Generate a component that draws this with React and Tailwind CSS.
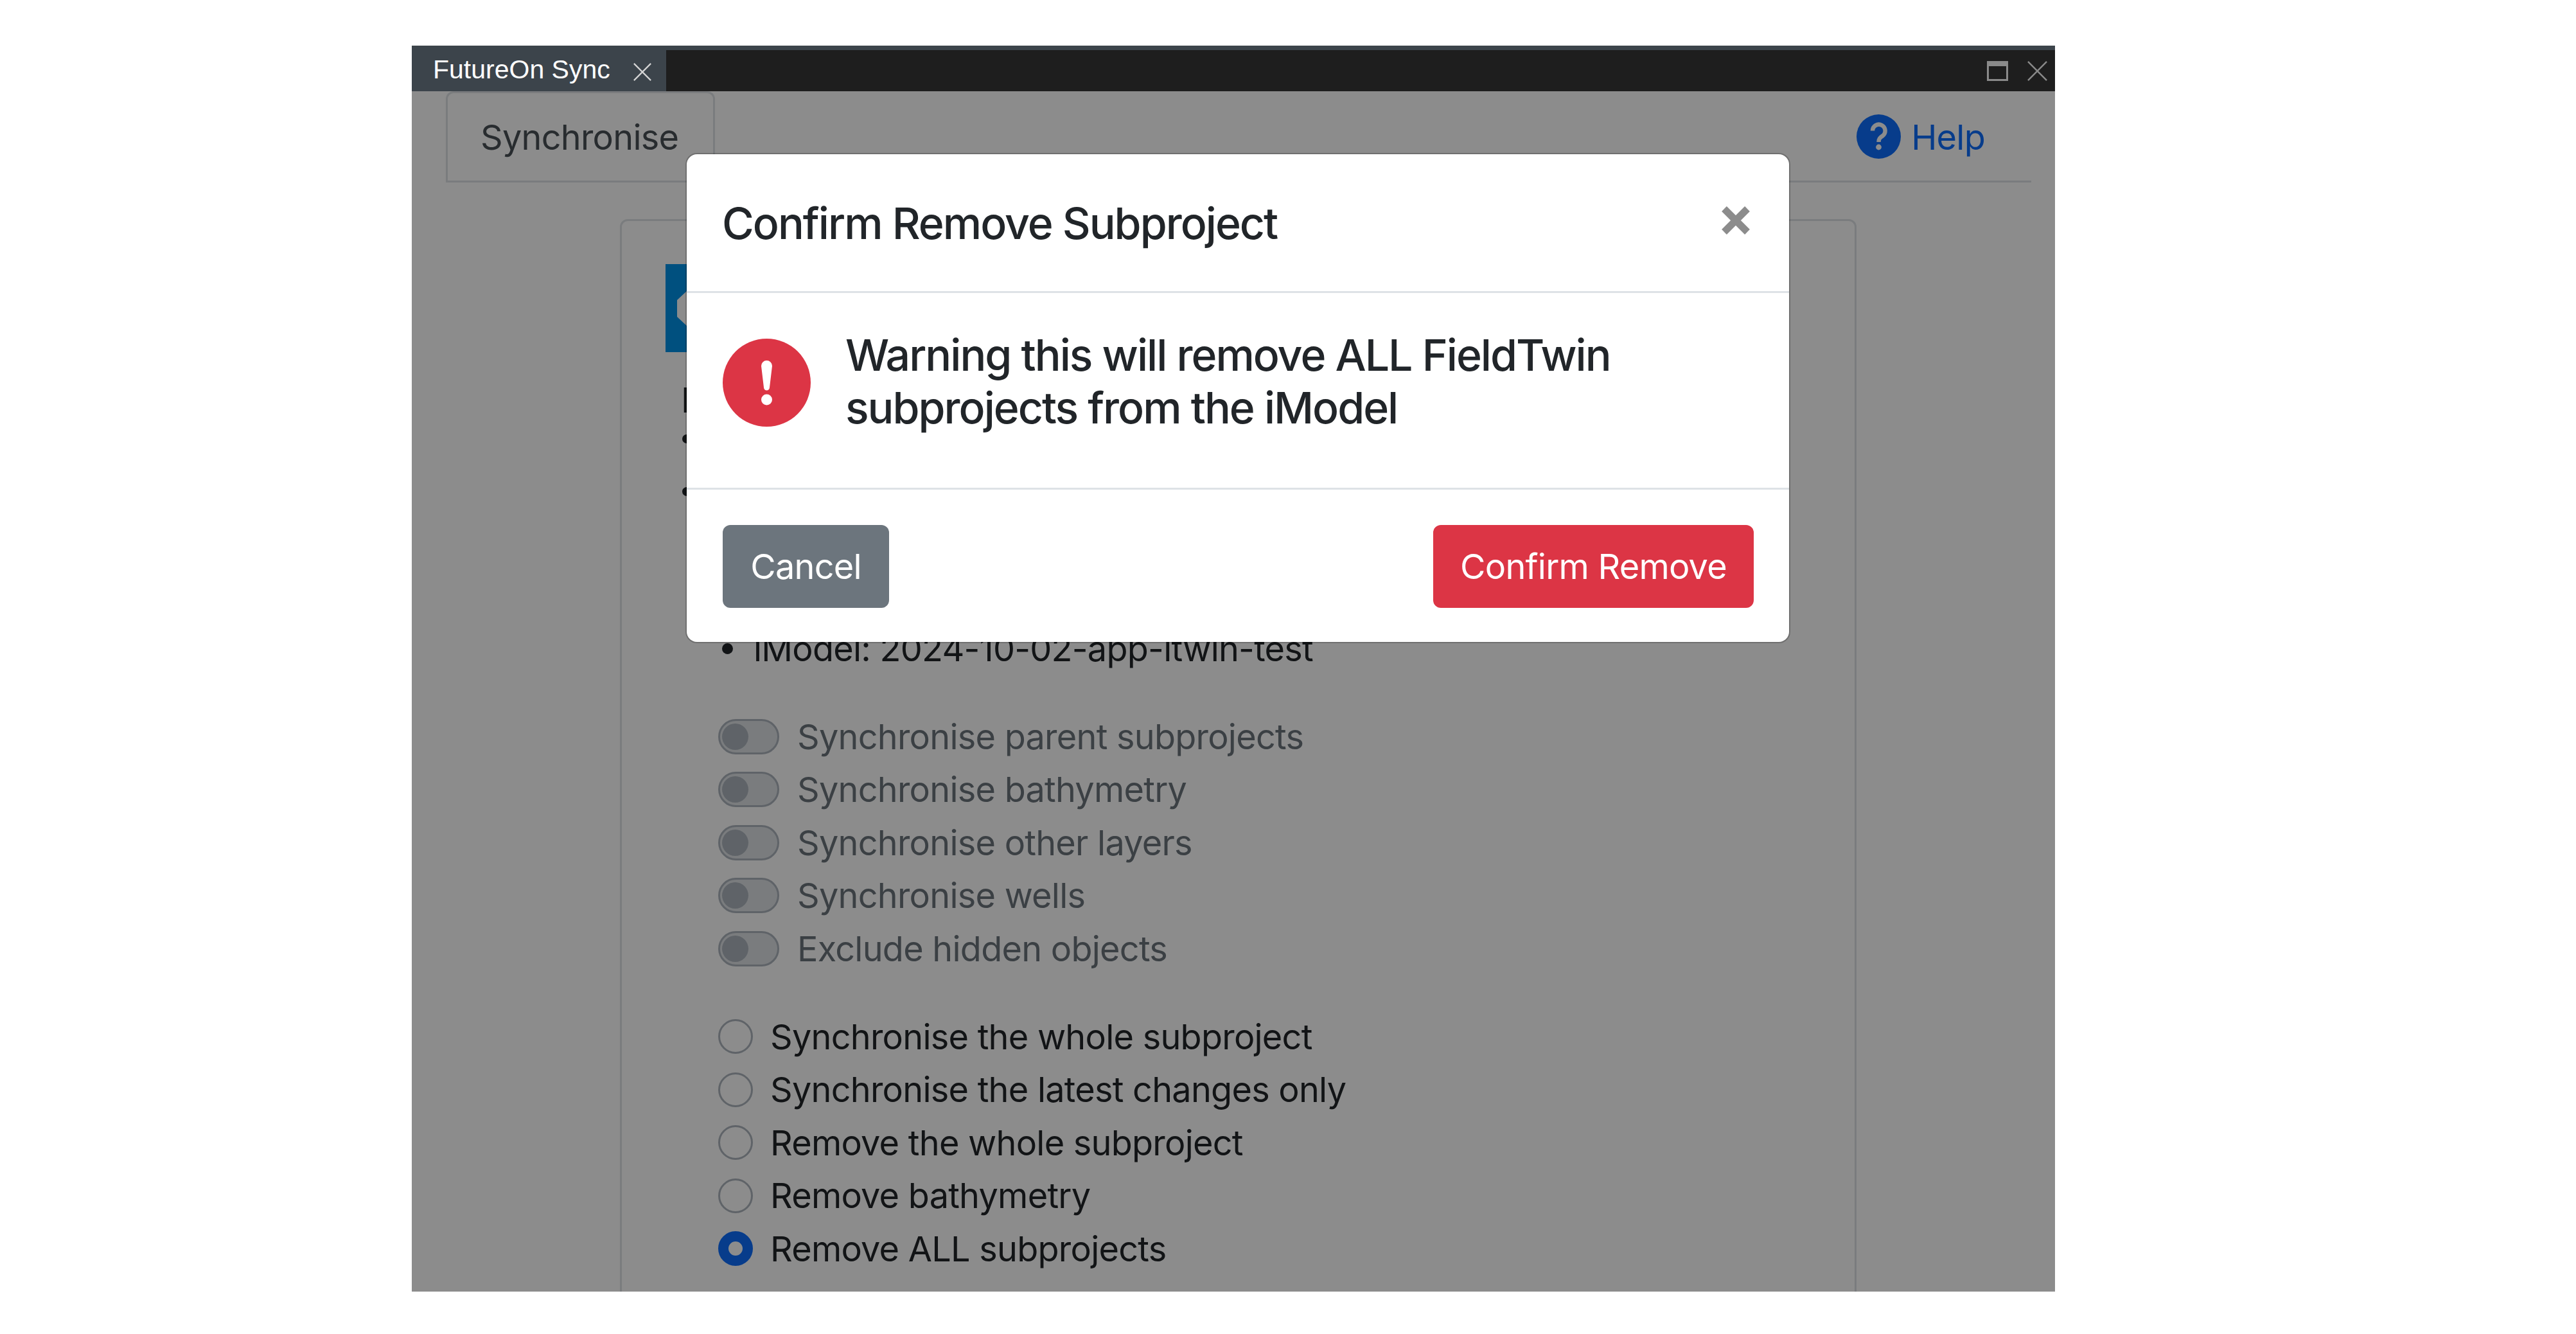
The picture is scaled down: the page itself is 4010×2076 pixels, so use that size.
const sans = 'font-["Inter","Liberation_Sans",sans-serif]';

const toggles = [
  'Synchronise parent subprojects',
  'Synchronise bathymetry',
  'Synchronise other layers',
  'Synchronise wells',
  'Exclude hidden objects',
];

const radios = [
  'Synchronise the whole subproject',
  'Synchronise the latest changes only',
  'Remove the whole subproject',
  'Remove bathymetry',
  'Remove ALL subprojects',
];

function ThinX({ className }) {
  return (
    <svg viewBox="0 0 32 32" className={className} fill="none" stroke="currentColor" strokeWidth="2.5">
      <path d="M1 1 31 31M31 1 1 31" />
    </svg>
  );
}

function HelpIcon() {
  return (
    <svg viewBox="0 0 69 69" className="w-[69px] h-[69px] shrink-0 -mt-[2px]">
      <circle cx="34.5" cy="34.5" r="34.5" fill="#0d6efd" />
      <path d="M25 25.5a9.8 9.8 0 1 1 15.5 8c-4 2.8-6 4.4-6 9.5" fill="none" stroke="#fff" strokeWidth="6.5" />
      <circle cx="34.5" cy="51" r="4.4" fill="#fff" />
    </svg>
  );
}

function AlertIcon() {
  return (
    <svg viewBox="0 0 137 137" className="w-[137px] h-[137px] shrink-0">
      <circle cx="68.5" cy="68.5" r="68.5" fill="#dc3545" />
      <path d="M60 42.5a8.5 8.5 0 0 1 17 0L73 76a4.5 4.5 0 0 1-9 0Z" fill="#fff" />
      <circle cx="68.5" cy="95" r="8.5" fill="#fff" />
    </svg>
  );
}

function Toggle({ label }) {
  return (
    <div className="flex items-center h-[82.6px] pl-[150px]">
      <span className="w-[95px] h-[55px] rounded-full border-[3px] border-[#adb5bd] bg-[#dee2e6] flex items-center pl-[3px] shrink-0">
        <span className="w-[41px] h-[41px] rounded-full bg-[#adb5bd]" />
      </span>
      <span className="ml-[28px] text-[#6c757d]">{label}</span>
    </div>
  );
}

function Radio({ label, checked }) {
  return (
    <div className="flex items-center h-[82.6px] pl-[150px]">
      {checked ? (
        <span className="w-[54px] h-[54px] rounded-full border-[16px] border-[#0d6efd] bg-white shrink-0" />
      ) : (
        <span className="w-[54px] h-[54px] rounded-full border-[3px] border-[#adb5bd] shrink-0" />
      )}
      <span className="ml-[27px] text-[#212529]">{label}</span>
    </div>
  );
}

function Bullet({ label, nested }) {
  return (
    <div className={`flex items-center h-[81.75px] ${nested ? 'pl-[156px]' : 'pl-[94px]'}`}>
      <span className={`rounded-full bg-[#212529] shrink-0 ${nested ? 'w-[17px] h-[17px]' : 'w-[14px] h-[14px]'}`} />
      {label && <span className="ml-[32px]">{label}</span>}
    </div>
  );
}

export default function App() {
  return (
    <div className={`w-[4010px] h-[2076px] bg-white pt-[71px] pl-[641px] ${sans}`}>
      <div className="w-[2558px] h-[1939px] flex flex-col">
        {/* window chrome stays above the backdrop */}
        <div className="h-[71px] shrink-0 bg-[#1e1e1e] border-t-[7px] border-[#3c444b] flex items-stretch">
          <div className={`w-[396px] bg-[#3c444b] flex items-center pl-[33px] text-white text-[41px] font-["Liberation_Sans",sans-serif]`}>
            <span className="-mt-[2px]">FutureOn Sync</span>
            <ThinX className="w-[28px] h-[28px] ml-[36px] mt-[4px] text-[#d5d5d5]" />
          </div>
          <div className="ml-auto flex items-center gap-[29px] pr-[11px] text-[#8a8a8a]">
            <span className="w-[33px] h-[31px] border-[3px] border-t-[8px] border-[#8a8a8a]" />
            <ThinX className="w-[33px] h-[31px]" />
          </div>
        </div>

        <div className="relative flex-1 overflow-hidden bg-white text-[54px] tracking-[-0.75px] text-[#212529]">
          <div className="flex items-stretch h-[142px] ml-[53px] mr-[37px] border-b-[3px] border-[#dee2e6]">
            <div className="w-[419px] border-[3px] border-b-0 border-[#dee2e6] rounded-t-[12px] flex items-center pl-[51px] text-[#495057]">
              Synchronise
            </div>
            <div className="ml-auto flex items-center gap-[16px] pr-[72px] pt-[3px] text-[#0d6efd]">
              <HelpIcon />
              <span>Help</span>
            </div>
          </div>

          <div className="ml-[324px] mt-[57px] w-[1925px] h-[1700px] border-[3px] border-[#dee2e6] rounded-[12px]">
            <div className="ml-[68px] mt-[67px] w-[300px] h-[137px] bg-[#0092e7] flex items-center pl-[18px]">
              <svg viewBox="0 0 120 54" className="w-[120px] h-[54px]">
                <polygon points="15,0 105,0 120,14 120,40 105,54 15,54 0,40 0,14" fill="#fff" />
              </svg>
            </div>
            <div className="mt-[33px] h-[83px] flex items-center pl-[92px]">FieldTwin</div>
            <div className="-mt-[22px]">
              <Bullet />
              <Bullet />
              <Bullet nested />
              <Bullet nested />
              <Bullet nested label="iModel: 2024-10-02-app-itwin-test" />
            </div>
            <div className="mt-[54px]">
              {toggles.map((t) => <Toggle key={t} label={t} />)}
            </div>
            <div className="mt-[54px]">
              {radios.map((r) => <Radio key={r} label={r} checked={r === 'Remove ALL subprojects'} />)}
            </div>
          </div>

          {/* backdrop */}
          <div className="absolute inset-0 bg-black/45" />

          {/* modal */}
          <div className="absolute left-[428px] top-[98px] w-[1716px] h-[759px] bg-white rounded-[16px] shadow-[0_0_0_2px_rgba(0,0,0,0.2)] flex flex-col text-[#212529] tracking-normal">
            <div className="h-[216px] shrink-0 border-b-[3px] border-[#dee2e6] flex items-center justify-between pl-[55px] pr-[61px]">
              <span className="text-[68px] tracking-[-2px] font-medium">Confirm Remove Subproject</span>
              <svg viewBox="0 0 44 44" className="w-[44px] h-[44px] -mt-[8px]">
                <path d="M4 4 40 40M40 4 4 40" stroke="#8c8c8c" strokeWidth="11" fill="none" />
              </svg>
            </div>
            <div className="h-[306px] shrink-0 border-b-[3px] border-[#dee2e6] flex items-start pl-[56px] pt-[71px]">
              <AlertIcon />
              <p className="ml-[54px] -mt-[16px] w-[1300px] text-[68px] tracking-[-2px] leading-[82px] font-medium">
                Warning this will remove ALL FieldTwin subprojects from the iModel
              </p>
            </div>
            <div className="flex-1 flex items-center justify-between pl-[56px] pr-[55px] pt-[2px]">
              <button className="w-[259px] h-[129px] rounded-[12px] bg-[#6c757d] text-white text-[54px] tracking-[-0.75px]">Cancel</button>
              <button className="w-[499px] h-[129px] rounded-[12px] bg-[#dc3545] text-white text-[54px] tracking-[-0.75px]">Confirm Remove</button>
            </div>
          </div>
        </div>
      </div>
    </div>
  );
}
